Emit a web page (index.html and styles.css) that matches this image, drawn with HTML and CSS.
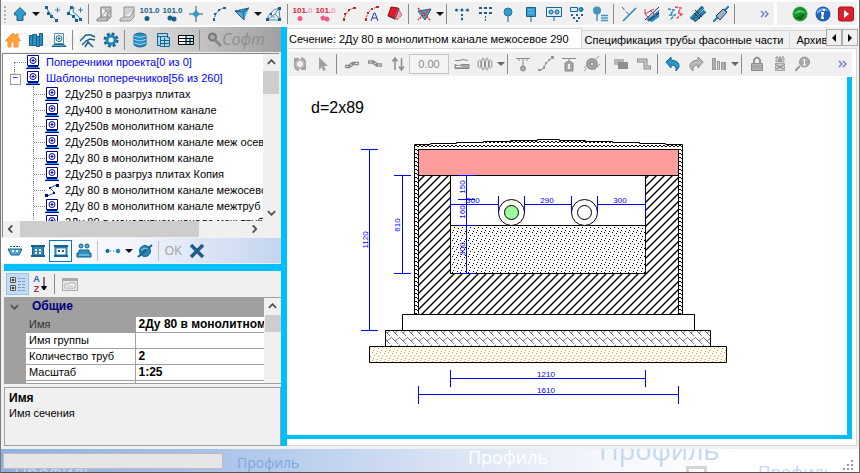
FILE: index.html
```html
<!DOCTYPE html>
<html lang="ru">
<head>
<meta charset="utf-8">
<title>Профиль</title>
<link rel="stylesheet" href="styles.css">
</head>
<body>
<svg class="sprite" aria-hidden="true">
  <symbol id="up" viewBox="0 0 16 16"><path d="M8 1.500 13.500 7v2H11v5.500H5V9H2.500V7z" fill="#2f9bd0" stroke="#17618c"/></symbol>
  <symbol id="poly" viewBox="0 0 16 16"><path d="M2 1 5 6l3 4 4 4M11 4h5M13.500 1.500v5" fill="none" stroke="#2388b8"/><g fill="#17618c"><path d="M1 0h3v3H1zM3 6h3v3H3zM6 9h3v3H6zM11 13h3v3h-3z"/></g></symbol>
  <symbol id="poly2" viewBox="0 0 16 16"><path d="M5 1 1 7l5 3 4 4M7 1l-1 5 5 4 3 4M11 4h5M13.500 1.500v5" fill="none" stroke="#2388b8"/><g fill="#17618c"><path d="M3 0h3v3H3zM0 6h3v3H0zM5 9h3v3H5zM8 13h3v3H8zM12 12h3v3h-3z"/></g></symbol>
  <symbol id="slab" viewBox="0 0 16 16"><path d="M5 1h10v10L11 15H1v-2l4-2zM5 1v10h10M5 11l6-7M11 15V8l4-4" fill="#bdbdbd" stroke="#8b8b8b"/></symbol>
  <symbol id="slab2" viewBox="0 0 16 16"><path d="M5 1h10v10L11 15H1v-2l4-2zM5 11h6l4-7" fill="#d0d0d0" stroke="#929292"/></symbol>
  <symbol id="ball1" viewBox="0 0 16 7"><circle cx="5" cy="3.500" r="2.500" fill="currentColor"/></symbol>
  <symbol id="ball2" viewBox="0 0 16 7"><circle cx="5" cy="3" r="2.500" fill="currentColor"/><circle cx="9" cy="4" r="2.500" fill="currentColor"/></symbol>
  <symbol id="cross" viewBox="0 0 16 16"><path d="M8 0v16M1 8h14" stroke="#17618c"/><path d="M8 4l4 4-4 4-4-4z" fill="#3f97c4"/></symbol>
  <symbol id="curve" viewBox="0 0 16 16"><path d="M3 14Q5 3 14 2" fill="none" stroke="currentColor" stroke-dasharray="2 1"/><path d="M2 12h2v3H2zM3 7h2v2H3zM7 3h2v2H7zM12 1h3v2h-3z" fill="currentColor"/></symbol>
  <symbol id="tri" viewBox="0 0 16 16"><path d="M1 5l14-3-5 12z" fill="#56acd5"/><path d="M1 5l8 1 6-4M9 6l1 8L1 5l14-3z" fill="none" stroke="#17618c"/></symbol>
  <symbol id="fan" viewBox="0 0 16 16"><path d="M1 14Q3 5 13 2l1 12zM1 14l8-6 4-6M9 8l5 6M4 8l5 4" fill="none" stroke="#4c8eb0"/><path d="M0 12h3v3H0zM4 7h2v2H4zM12 1h3v3h-3zM12 12h3v3h-3z" fill="#17618c"/></symbol>
  <symbol id="curveA" viewBox="0 0 16 16"><path d="M2 14Q3 3 14 1" fill="none" stroke="#b33" stroke-dasharray="2 1"/><path d="M1 12h2v3H1zM3 6h2v2H3zM7 2h2v2H7zM12 0h3v2h-3z" fill="#b42c2c"/><path d="M7 15l3-8h1l3 8M8 12h5" fill="none" stroke="#2334ad"/></symbol>
  <symbol id="redslab" viewBox="0 0 16 16"><path d="M4 1l7 1-3 11-7-3z" fill="#e31a22" stroke="#901018"/><path d="M11 2l4 7-5 5-3-2z" fill="#f5a5a8" stroke="#b51924" stroke-dasharray="1 1"/><path d="M2 10l6 3 4-11" stroke="#263d66" fill="none"/></symbol>
  <symbol id="killtri" viewBox="0 0 16 16"><path d="M2 5l13-2-6 11z" fill="#5a9fc0" stroke="#17618c"/><path d="M2 2l12 12M14 3L2 14" stroke="#ce3434" stroke-width="1.500" stroke-dasharray="2 1"/></symbol>
  <symbol id="dots3" viewBox="0 0 16 16"><path d="M2 4h12M8 8v7" stroke="#7bbddd" stroke-dasharray="1 2"/><g fill="#17618c"><circle cx="2.500" cy="4" r="1.500"/><circle cx="8" cy="4" r="1.500"/><circle cx="13.500" cy="4" r="1.500"/><path d="M7 8h2v2H7zM7 12h2v2H7z"/></g></symbol>
  <symbol id="dots6" viewBox="0 0 16 16"><g fill="#17618c"><path d="M2 1h3v2H2zM7 1h3v2H7zM12 1h3v2h-3zM2 6h3v2H2zM7 6h3v2H7zM12 6h3v2h-3zM8 10h1v2H8zM8 13h1v2H8z"/></g></symbol>
  <symbol id="pin" viewBox="0 0 16 16"><circle cx="8" cy="6" r="4" fill="#2f9bd0" stroke="#2377a2"/><path d="M8 10v6" stroke="#17618c"/></symbol>
  <symbol id="pinsq" viewBox="0 0 16 16"><path d="M3.500 1.500h9v9h-9z" fill="#2f9bd0" stroke="#17618c"/><path d="M5 4h6M5 7h6" stroke="#77c1e5"/><path d="M8 10v6" stroke="#17618c"/></symbol>
  <symbol id="pinbox" viewBox="0 0 16 16"><path d="M.5 1.500h15v9H.5z" fill="#d8edf6" stroke="#17618c"/><circle cx="5" cy="6" r="2" fill="#7bbddd" stroke="#17618c"/><circle cx="11" cy="6" r="2" fill="#7bbddd" stroke="#17618c"/><path d="M8 11v4" stroke="#17618c"/></symbol>
  <symbol id="pinmix" viewBox="0 0 16 16"><path d="M1.500 1.500h7v4h-7z" fill="#d8edf6" stroke="#17618c"/><circle cx="12" cy="3.500" r="2" fill="#2f9bd0" stroke="#17618c"/><path d="M2 8h2v2H2zM7 8h2v2H7zM12 8h2v2h-2zM4 11h2v2H4zM9 11h2v2H9zM7 14h2v2H7z" fill="#17618c"/></symbol>
  <symbol id="pinlist" viewBox="0 0 16 16"><circle cx="5" cy="4.500" r="4" fill="#4395bd"/><path d="M5 8v7" stroke="#17618c"/><path d="M9 9.500h7M9 12h7M9 14.500h7" stroke="#3c9ac9" stroke-width="1.500"/></symbol>
  <symbol id="split" viewBox="0 0 16 16"><path d="M2 15L15 2" stroke="#1d84b5" stroke-width="1.500"/><path d="M1 1l7 8" stroke="#3f57d4" stroke-dasharray="4 2"/></symbol>
  <symbol id="redpipe" viewBox="0 0 16 16"><path d="M2 14L15 4v7l-7 5z" fill="#238bbd"/><path d="M1 14L15 1M4 15L15 7" stroke="#1d1d65"/><path d="M1 3v5l5 5M1 8l9-5M6 4l6 6" stroke="#d83c47" fill="none"/></symbol>
  <symbol id="zig" viewBox="0 0 16 16"><path d="M1 3l6 1-4 5 5 0-5 5" stroke="#2586b5" fill="none" stroke-dasharray="3 1" stroke-width="1.500"/><path d="M8 1l6 1-3 5 4 1-6 5" stroke="#e14e60" fill="none" stroke-dasharray="3 1" stroke-width="1.500"/></symbol>
  <symbol id="pipes" viewBox="0 0 16 16"><path d="M1 13L13 1M4 15L15 5" stroke="#17618c" stroke-width="3.500"/><path d="M1 12L13 2M5 14L15 5" stroke="#42bad9"/><path d="M5 4l7 7M4 7l6 6" stroke="#183550"/></symbol>
  <symbol id="cyl" viewBox="0 0 16 16"><path d="M0 16L16 0" stroke="#157db4" stroke-width="2"/><path d="M3 10L10 3l4 3-7 8z" fill="#9cb0c9" stroke="#233c58"/></symbol>
  <symbol id="more" viewBox="0 0 10 8"><path d="M1 1l3 3-3 3M5 1l3 3-3 3" fill="none" stroke="#6974c2" stroke-width="1.300"/></symbol>
  <symbol id="green" viewBox="0 0 16 16"><circle cx="8" cy="8" r="7" fill="#15922b" stroke="#3c9847"/><path d="M2 8Q7 1 14 7L9 6z" fill="#5ed16b"/><path d="M3 12l9-4-2 6z" fill="#06651a"/></symbol>
  <symbol id="info" viewBox="0 0 16 16"><circle cx="8" cy="8" r="7.500" fill="#2262b5"/><path d="M2 5q6-6 12 0-6-2-12 3z" fill="#6faae7"/><path d="M9 3v2M6 7h2l-1 5h2" stroke="#fff" stroke-width="2" fill="none"/></symbol>
  <symbol id="play" viewBox="0 0 16 16"><rect x=".5" y="1" width="15" height="14" rx="2" fill="#d9202d" stroke="#a31521"/><path d="M6 4l5 4-5 4z" fill="#fff"/></symbol>
  <symbol id="home" viewBox="0 0 16 16"><path d="M1 8l7-7 3 3V2h2v4l2 2v1h-2v6H9v-5H6v5H3V9H1z" fill="#ffa43b" stroke="#f3913e"/></symbol>
  <symbol id="books" viewBox="0 0 16 16"><path d="M1.500 3.500h3v10h-3zM4.500 2.500h4v11h-4zM8.500 4.500h3v10h-3zM11.500 1.500h3v12h-3z" fill="#2b91c3" stroke="#17618c"/></symbol>
  <symbol id="target" viewBox="0 0 16 16"><path d="M3.500 1.500h9v10h-9z" fill="#fff" stroke="#4c91b5"/><circle cx="8" cy="6.500" r="3" fill="none" stroke="#17618c"/><path d="M8 5v3M6.500 6.500h3" stroke="#17618c"/><path d="M1 14.500l2-2h10l2 2z" fill="#69afd0" stroke="#17618c"/></symbol>
  <symbol id="graph" viewBox="0 0 16 16"><path d="M0 9l6-6h5l4 2M2 13l4-4 4-2 5 1M5 15l3-5 5 5" fill="none" stroke="#17618c" stroke-width="1.500"/></symbol>
  <symbol id="gear" viewBox="0 0 16 16"><circle cx="8" cy="8" r="6" fill="none" stroke="#17618c" stroke-width="3" stroke-dasharray="2.700 2"/><circle cx="8" cy="8" r="4" fill="#e4f3f9" stroke="#2684b5" stroke-width="3"/></symbol>
  <symbol id="db" viewBox="0 0 16 16"><path d="M2 3Q8-1 14 3v10q-6 4-12 0z" fill="#218fc5" stroke="#17618c"/><path d="M2 4q6 3 12 0M2 7.500q6 3 12 0M2 11q6 3 12 0" fill="none" stroke="#a7d7ec"/></symbol>
  <symbol id="sheet" viewBox="0 0 16 16"><path d="M2.500 1.500h10v4h2v9h-9v-1h-3zM2 4.500h10M5.500 5v8M6 8.500h8M6 11.500h8M9.500 6v8" fill="#a9d8ed" stroke="#17618c"/></symbol>
  <symbol id="tablei" viewBox="0 0 16 16"><path d="M.5 3.500h15v9H.5z" fill="#a4eaff" stroke="#000"/><path d="M1 4h6v8H1z" fill="#fff"/><path d="M0 6.500h16M0 9.500h16M8 3v10M12 7v6" stroke="#000"/></symbol>
  <symbol id="search" viewBox="0 0 16 16"><circle cx="5.500" cy="5" r="3.500" fill="#a8a8a8" stroke="#777" stroke-width="2"/><path d="M8 8l6 6" stroke="#888" stroke-width="3"/></symbol>
  <symbol id="node" viewBox="0 0 14 16"><path d="M1.500 1.500h11v10h-11z" fill="#fff" stroke="#00009c"/><circle cx="7" cy="6.500" r="3" fill="none" stroke="#00009c"/><path d="M7 5v3M5.500 6.500h3" stroke="#00009c"/><path d="M0 15l2-3h10l2 3z" fill="#00a6d0"/><path d="M0 14.500h14M2 12.500h10" stroke="#00009c"/></symbol>
  <symbol id="nodeline" viewBox="0 0 14 16"><path d="M11 3L5 6l5 5-8 3" fill="none" stroke="#17618c"/><path d="M11 2h3v3h-3zM4 5h2v2H4zM8 10h2v2H8zM0 12h3v3H0z" fill="#00009c"/></symbol>
  <symbol id="trough" viewBox="0 0 16 16"><path d="M1 6h14l-3 6H4z" fill="#52a7cf" stroke="#17618c"/><path d="M3 3.500h10" stroke="#17618c" stroke-dasharray="2 1"/><path d="M5 7h2v2H5zM9 7h2v2H9z" fill="#fff"/></symbol>
  <symbol id="duct" viewBox="0 0 16 16"><path d="M2.500 3.500h11v9h-11z" fill="#338bb5" stroke="#17618c"/><path d="M1 3h14M1 13h14" stroke="#17618c" stroke-width="2"/><path d="M5 6h2v2H5zM9 6h2v2H9zM5 9h2v2H5zM9 9h2v2H9z" fill="#fff"/></symbol>
  <symbol id="duct2" viewBox="0 0 16 16"><path d="M2.500 4.500h11v8h-11z" fill="#fff" stroke="#2684b5" stroke-width="2"/><path d="M1 3h14M1 13h14" stroke="#17618c" stroke-width="2"/><path d="M5 7h2v2H5zM9 7h2v2H9z" fill="#17618c"/></symbol>
  <symbol id="cart" viewBox="0 0 16 16"><circle cx="5" cy="3" r="2" fill="#56aed6" stroke="#17618c"/><circle cx="11" cy="3" r="2" fill="#56aed6" stroke="#17618c"/><path d="M3 7h10v3h2v4H1v-4h2z" fill="#2c91c0" stroke="#17618c"/><path d="M3 12h10" stroke="#a7d7ec"/></symbol>
  <symbol id="link" viewBox="0 0 16 16"><path d="M2 8h12" stroke="#17618c" stroke-dasharray="1 2"/><circle cx="2.500" cy="8" r="2" fill="#17618c"/><circle cx="13" cy="8" r="2.200" fill="#2684b5"/></symbol>
  <symbol id="empty" viewBox="0 0 16 16"><circle cx="8" cy="8" r="5.500" fill="#2586b5" stroke="#17618c"/><path d="M1 14L15 2" stroke="#17618c" stroke-width="2"/><path d="M4 7q4-3 7-1" fill="none" stroke="#8fcde8"/></symbol>
  <symbol id="close" viewBox="0 0 16 16"><path d="M2 2l12 12M14 2L2 14" stroke="#1c5c87" stroke-width="3.500"/></symbol>
  <symbol id="cat" viewBox="0 0 20 18"><path d="M2.500 2.500h5v5h-5zM2.500 10.500h5v5h-5z" fill="#fff" stroke="#555"/><path d="M3.500 5h3M5 3.500v3M3.500 13h3M5 11.500v3" stroke="#000"/><path d="M10 3.500h8M10 6.500h8M10 9.500h8M10 12.500h8M10 15.500h8" stroke="#7d95c9" stroke-dasharray="3 1"/></symbol>
  <symbol id="downarr" viewBox="0 0 8 16"><path d="M4 1v13M1.500 10.500 4 14l2.500-3.500z" stroke="#000" fill="#000"/></symbol>
  <symbol id="card" viewBox="0 0 16 16"><path d="M.5 2.500h15v12H.5z" fill="#e6e6e6" stroke="#aaa"/><path d="M1 4h14" stroke="#aaa" stroke-width="2"/><path d="M3 8h3l1-1h6v5H3z" fill="#fff" stroke="#aaa"/><path d="M5 10h6" stroke="#aaa"/></symbol>
  <symbol id="refresh" viewBox="0 0 16 16"><path d="M2 2h5v3L5 6q-2 4 2 6v3Q1 14 2 7zM9 1q6 1 5 8v5H9v-3l2-1q2-4-2-6z" fill="#a0a0a0"/><circle cx="8" cy="8" r="4" fill="none" stroke="#b8b8b8" stroke-width="2"/></symbol>
  <symbol id="cursor" viewBox="0 0 16 16"><path d="M4 1l9 9H9l2 4-3 1-1-4-3 3z" fill="#a0a0a0"/></symbol>
  <symbol id="chain" viewBox="0 0 16 16"><path d="M1 10.500h4l4-3h6" stroke="#8c8c8c" stroke-width="3.500" fill="none"/><path d="M2 10.500h2M6 9.500l2-1M11 7.500h3" stroke="#ddd"/></symbol>
  <symbol id="chain2" viewBox="0 0 16 16"><path d="M1 6h5l4 3h5" stroke="#8c8c8c" stroke-width="3.500" fill="none"/><path d="M2 6h3M7 7l2 1M11 9h3" stroke="#ddd"/></symbol>
  <symbol id="updown" viewBox="0 0 16 16"><path d="M5 14V3M2.500 5.500L5 2l2.500 3.500M11.500 2v11M9 10.500l2.500 3.500 2.500-3.500" stroke="#8c8c8c" stroke-width="1.500" fill="none"/></symbol>
  <symbol id="pipeg" viewBox="0 0 16 16"><path d="M1 4.500h5l2-1 6 1" stroke="#858585" fill="none"/><path d="M1 8.500q4 3 7 0h7v4H1z" stroke="#858585" fill="#aaa"/><path d="M2 10.500h5" stroke="#eee"/></symbol>
  <symbol id="coil" viewBox="0 0 16 16"><g fill="none" stroke="#8c8c8c"><ellipse cx="2.500" cy="8" rx="1.500" ry="4"/><ellipse cx="6" cy="8" rx="1.500" ry="6"/><ellipse cx="10" cy="8" rx="1.500" ry="6"/><ellipse cx="13.500" cy="8" rx="1.500" ry="4"/></g></symbol>
  <symbol id="tee" viewBox="0 0 16 16"><path d="M1 2.500h14M8 3v8M3 4h2M11 4h2" stroke="#8c8c8c"/><circle cx="8" cy="12.500" r="2.500" fill="#aaa" stroke="#888"/></symbol>
  <symbol id="pathg" viewBox="0 0 16 16"><path d="M1 15l5-3 2-5 7-6" fill="none" stroke="#8c8c8c"/><path d="M0 13h3v2H0zM5 10h2v3H5zM7 6h2v2H7zM10 3h2v2h-2zM13 0h3v3h-3z" fill="#999"/></symbol>
  <symbol id="bottle" viewBox="0 0 16 16"><path d="M1 2.500h14M8 2v4" stroke="#8c8c8c"/><path d="M4 15V7l4-2 4 2v8z" fill="#a8a8a8" stroke="#888"/><path d="M7 8h2v5H7z" fill="#eee"/></symbol>
  <symbol id="eye" viewBox="0 0 16 16"><circle cx="8" cy="8" r="5" fill="#aaa" stroke="#999" stroke-width="2"/><circle cx="8" cy="8" r="2" fill="#ddd" stroke="#777"/><path d="M0 12L6 6M0 15l4-4M10 14l6-6M11 4l4-4" stroke="#999"/></symbol>
  <symbol id="stack" viewBox="0 0 16 16"><path d="M1 3h10v6H1z" fill="#b5b5b5"/><path d="M5 6h10v7H5z" fill="#8f8f8f"/></symbol>
  <symbol id="step" viewBox="0 0 16 16"><path d="M1 4.500h8.500v7H15" fill="none" stroke="#8c8c8c" stroke-width="4"/><path d="M2 4.500h7.500v7H14" fill="none" stroke="#c6c6c6" stroke-width="2"/></symbol>
  <symbol id="undo" viewBox="0 0 16 16"><path d="M1 6l5-5v3q9 1 8 7l-3 4q1-6-5-6v3z" fill="#269acb" stroke="#17618c"/></symbol>
  <symbol id="redo" viewBox="0 0 16 16"><path d="M15 6l-5-5v3q-9 1-8 7l3 4q-1-6 5-6v3z" fill="#bbb" stroke="#888"/></symbol>
  <symbol id="bars" viewBox="0 0 16 16"><path d="M1 2h4v12H1zM6 5h3v9H6zM10 6h5v8h-5z" fill="#999"/><path d="M3 3v10M7.500 6v8M12 7v7" stroke="#c8c8c8"/></symbol>
  <symbol id="lock" viewBox="0 0 16 16"><path d="M5 7V4q3-5 6 0v3" fill="none" stroke="#949494" stroke-width="2"/><path d="M2.500 7.500h11v7h-11z" fill="#b5b5b5" stroke="#8c8c8c"/><path d="M3 10h10M3 12h10" stroke="#999"/></symbol>
  <symbol id="manlock" viewBox="0 0 16 16"><path d="M4 1h8v5H4zM3.500 7.500h9v7h-9z" fill="#ccc" stroke="#8c8c8c" stroke-dasharray="2 1"/><circle cx="8" cy="4" r="2" fill="#999"/><path d="M4 9l8 4M12 9l-8 4" stroke="#888"/></symbol>
  <symbol id="mag1" viewBox="0 0 16 16"><circle cx="9.500" cy="6" r="5" fill="#aaa" stroke="#949494"/><path d="M5 10L0 15" stroke="#999" stroke-width="2"/><path d="M8 4.500L9.500 3v6M8 9h3" stroke="#fff" fill="none"/></symbol>
  <symbol id="chev" viewBox="0 0 10 6"><path d="M1 5l4-4 4 4" fill="none" stroke="#505050" stroke-width="2"/></symbol>
</svg>

<div class="window">
  <header class="topbar">
    <div class="strip">
      <span class="grip"></span>
      <button class="tool" aria-label="Вверх"><svg><use href="#up"/></svg></button><button class="drop" aria-label="Список"></button>
      <button class="tool" aria-label="Линия"><svg><use href="#poly"/></svg></button>
      <button class="tool" aria-label="Линии"><svg><use href="#poly2"/></svg></button>
      <i class="sep"></i>
      <button class="tool" aria-label="Плита"><svg><use href="#slab"/></svg></button>
      <button class="tool" aria-label="Откос"><svg><use href="#slab2"/></svg></button>
      <button class="tool mark">101.0<svg><use href="#ball1"/></svg></button>
      <button class="tool mark">101.0<svg><use href="#ball2"/></svg></button>
      <button class="tool" aria-label="Точка"><svg><use href="#cross"/></svg></button>
      <button class="tool blue" aria-label="Кривая"><svg><use href="#curve"/></svg></button>
      <button class="tool" aria-label="Поверхность"><svg><use href="#tri"/></svg></button><button class="drop" aria-label="Список"></button>
      <button class="tool" aria-label="Сетка"><svg><use href="#fan"/></svg></button>
      <i class="sep"></i>
      <button class="tool mark red"><span>101.<b>0</b></span><svg><use href="#ball1"/></svg></button>
      <button class="tool mark red"><span>101.<b>0</b></span><svg><use href="#ball2"/></svg></button>
      <button class="tool darkred" aria-label="Красная кривая"><svg><use href="#curve"/></svg></button>
      <button class="tool" aria-label="Подпись кривой"><svg><use href="#curveA"/></svg></button>
      <button class="tool" aria-label="Красная плита"><svg><use href="#redslab"/></svg></button>
      <i class="sep"></i>
      <button class="tool" aria-label="Удалить"><svg><use href="#killtri"/></svg></button><button class="drop" aria-label="Список"></button>
      <i class="sep"></i>
      <button class="tool" aria-label="Ряд"><svg><use href="#dots3"/></svg></button>
      <button class="tool" aria-label="Ряды"><svg><use href="#dots6"/></svg></button>
      <button class="tool" aria-label="Труба"><svg><use href="#pin"/></svg></button>
      <button class="tool" aria-label="Короб"><svg><use href="#pinsq"/></svg></button>
      <button class="tool" aria-label="Канал"><svg><use href="#pinbox"/></svg></button>
      <button class="tool" aria-label="Набор"><svg><use href="#pinmix"/></svg></button>
      <button class="tool" aria-label="Список труб"><svg><use href="#pinlist"/></svg></button>
      <i class="sep"></i>
      <button class="tool" aria-label="Ответвление"><svg><use href="#split"/></svg></button>
      <button class="tool" aria-label="Футляр"><svg><use href="#redpipe"/></svg></button>
      <button class="tool" aria-label="Разрыв"><svg><use href="#zig"/></svg></button>
      <button class="tool" aria-label="Трубы"><svg><use href="#pipes"/></svg></button>
      <button class="tool" aria-label="Цилиндр"><svg><use href="#cyl"/></svg></button>
      <i class="sep"></i>
      <button class="more" aria-label="Ещё"><svg><use href="#more"/></svg></button>
    </div>
    <div class="strip side">
      <button class="tool" aria-label="Сеть"><svg><use href="#green"/></svg></button>
      <button class="tool" aria-label="Сведения"><svg><use href="#info"/></svg></button>
      <button class="tool" aria-label="Видео"><svg><use href="#play"/></svg></button>
    </div>
  </header>

  <main class="work">
    <aside class="left">
      <div class="bar navbar">
        <span class="ghost ghost-a">Профиль</span><span class="ghost ghost-b">Софт</span>
        <button class="tool" aria-label="Домой"><svg><use href="#home"/></svg></button>
        <button class="tool" aria-label="Книги"><svg><use href="#books"/></svg></button>
        <button class="tool" aria-label="Поперечники"><svg><use href="#target"/></svg></button>
        <i class="sep"></i>
        <button class="tool" aria-label="График"><svg><use href="#graph"/></svg></button>
        <button class="tool" aria-label="Настройки"><svg><use href="#gear"/></svg></button>
        <i class="sep"></i>
        <button class="tool" aria-label="База"><svg><use href="#db"/></svg></button>
        <button class="tool" aria-label="Ведомость"><svg><use href="#sheet"/></svg></button>
        <button class="tool" aria-label="Таблица"><svg><use href="#tablei"/></svg></button>
        <i class="sep"></i>
        <button class="tool" aria-label="Поиск"><svg><use href="#search"/></svg></button>
      </div>

      <div class="treebox">
        <ul class="tree">
          <li class="root"><svg><use href="#node"/></svg>Поперечники проекта[0 из 0]</li>
          <li class="root open"><svg><use href="#node"/></svg>Шаблоны поперечников[56 из 260]</li>
          <li><svg><use href="#node"/></svg>2Ду250 в разгруз плитах</li>
          <li><svg><use href="#node"/></svg>2Ду400 в монолитном канале</li>
          <li><svg><use href="#node"/></svg>2Ду250в монолитном канале</li>
          <li><svg><use href="#node"/></svg>2Ду250в монолитном канале меж осевое</li>
          <li><svg><use href="#node"/></svg>2Ду 80 в монолитном канале</li>
          <li><svg><use href="#node"/></svg>2Ду250 в разгруз плитах Копия</li>
          <li><svg><use href="#nodeline"/></svg>2Ду 80 в монолитном канале межосевое</li>
          <li><svg><use href="#node"/></svg>2Ду 80 в монолитном канале межтруб</li>
          <li><svg><use href="#node"/></svg>2Ду 80 в монолитном канале меж труб</li>
        </ul>
        <div class="vscroll"><svg><use href="#chev"/></svg><i class="thumb tall"></i><svg class="down"><use href="#chev"/></svg></div>
        <div class="hscroll"><svg class="toleft"><use href="#chev"/></svg><i class="hthumb"></i><svg class="toright"><use href="#chev"/></svg></div>
      </div>

      <div class="bar typebar">
        <button class="tool" aria-label="Лоток"><svg><use href="#trough"/></svg></button>
        <button class="tool" aria-label="Канал"><svg><use href="#duct"/></svg></button>
        <button class="tool chosen" aria-label="Монолитный канал"><svg><use href="#duct2"/></svg></button>
        <button class="tool" aria-label="Опора"><svg><use href="#cart"/></svg></button>
        <i class="sep"></i>
        <button class="tool" aria-label="Связь"><svg><use href="#link"/></svg></button><button class="drop" aria-label="Список"></button>
        <button class="tool" aria-label="Без труб"><svg><use href="#empty"/></svg></button>
        <i class="sep"></i>
        <button class="tool ok" disabled>OK</button>
        <button class="tool" aria-label="Закрыть"><svg><use href="#close"/></svg></button>
      </div>

      <div class="props">
        <div class="bar gridbar">
          <button class="tool pressed" aria-label="По категориям"><svg class="wide"><use href="#cat"/></svg></button>
          <button class="tool az" aria-label="По алфавиту"><span><b>A</b><em>Z</em></span><svg><use href="#downarr"/></svg></button>
          <i class="sep"></i>
          <button class="tool" aria-label="Страницы свойств" disabled><svg><use href="#card"/></svg></button>
        </div>
        <div class="propgrid">
          <table>
            <colgroup><col class="c-gutter"><col class="c-name"><col></colgroup>
            <thead><tr><td class="gutter"><svg class="down"><use href="#chev"/></svg></td><th colspan="2" scope="colgroup">Общие</th></tr></thead>
            <tbody>
              <tr class="current"><td class="gutter"></td><th scope="row">Имя</th><td>2Ду 80 в монолитном канале</td></tr>
              <tr><td class="gutter"></td><th scope="row">Имя группы</th><td></td></tr>
              <tr><td class="gutter"></td><th scope="row">Количество труб</th><td>2</td></tr>
              <tr><td class="gutter"></td><th scope="row">Масштаб</th><td>1:25</td></tr>
              <tr><td class="gutter"></td><th scope="row"></th><td></td></tr>
            </tbody>
          </table>
          <div class="vscroll"><svg><use href="#chev"/></svg><i class="thumb"></i><svg class="down"><use href="#chev"/></svg></div>
        </div>
        <div class="hint"><b>Имя</b><span>Имя сечения</span></div>
      </div>
    </aside>

    <section class="right">
      <nav class="tabs" role="tablist">
        <button class="tab active" role="tab">Сечение: 2Ду 80 в монолитном канале межосевое 290</button>
        <button class="tab" role="tab">Спецификация трубы фасонные части</button>
        <button class="tab cut" role="tab">Архивы</button>
        <span class="spin"><button class="prev" aria-label="Назад"></button><button class="next" aria-label="Вперёд"></button></span>
      </nav>
      <div class="page">
        <div class="bar drawbar">
          <button class="tool" aria-label="Обновить"><svg><use href="#refresh"/></svg></button>
          <button class="tool" aria-label="Выбор"><svg><use href="#cursor"/></svg></button>
          <i class="sep"></i>
          <button class="tool" aria-label="Звено"><svg><use href="#chain"/></svg></button>
          <button class="tool" aria-label="Звено вниз"><svg><use href="#chain2"/></svg></button>
          <button class="tool" aria-label="Вверх-вниз"><svg><use href="#updown"/></svg></button>
          <input class="num" type="text" value="0.00" aria-label="Значение" disabled>
          <button class="tool" aria-label="Профиль трубы"><svg><use href="#pipeg"/></svg></button>
          <button class="tool" aria-label="Компенсатор"><svg><use href="#coil"/></svg></button><button class="drop grey" aria-label="Список"></button>
          <i class="sep"></i>
          <button class="tool" aria-label="Тройник"><svg><use href="#tee"/></svg></button>
          <button class="tool" aria-label="Путь"><svg><use href="#pathg"/></svg></button>
          <button class="tool" aria-label="Сосуд"><svg><use href="#bottle"/></svg></button>
          <button class="tool" aria-label="Вид"><svg><use href="#eye"/></svg></button>
          <i class="sep"></i>
          <button class="tool" aria-label="Слои"><svg><use href="#stack"/></svg></button>
          <button class="tool" aria-label="Ступень"><svg><use href="#step"/></svg></button>
          <i class="sep"></i>
          <button class="tool" aria-label="Отменить"><svg><use href="#undo"/></svg></button>
          <button class="tool" aria-label="Повторить"><svg><use href="#redo"/></svg></button>
          <button class="tool" aria-label="Столбцы"><svg><use href="#bars"/></svg></button><button class="drop grey" aria-label="Список"></button>
          <i class="sep"></i>
          <button class="tool" aria-label="Замок"><svg><use href="#lock"/></svg></button>
          <button class="tool" aria-label="Блокировка"><svg><use href="#manlock"/></svg></button>
          <button class="tool" aria-label="Масштаб"><svg><use href="#mag1"/></svg></button>
          <button class="more" aria-label="Ещё"><svg><use href="#more"/></svg></button>
        </div>
        <div class="canvas">
          <svg class="drawing" viewBox="288 77 559 357" width="559" height="357" role="img" aria-label="Сечение канала">
            <defs>
              <pattern id="hatch" width="8" height="8" patternUnits="userSpaceOnUse"><path d="M-1 9L9-1M-1 1L1-1M7 9L9 7" stroke="#000" stroke-width="1.400"/></pattern>
              <pattern id="sand" width="8" height="8" patternUnits="userSpaceOnUse"><path d="M0 1h1v1H0zM4 0h1v1H4zM6 3h1v1H6zM2 4h1v1H2zM5 6h1v1H5zM1 7h1v1H1z" fill="#000" stroke="none"/></pattern>
              <pattern id="gold" width="8" height="8" patternUnits="userSpaceOnUse"><path d="M0 1h1v1H0zM4 0h1v1H4zM6 3h1v1H6zM2 4h1v1H2zM5 6h1v1H5zM1 7h1v1H1z" fill="#ffa000" stroke="none"/></pattern>
              <pattern id="stone" width="8" height="8" patternUnits="userSpaceOnUse"><path d="M0 2l3 3 5-4M3 5l3 3" fill="none" stroke="#777"/></pattern>
              <pattern id="wave" width="4" height="4" patternUnits="userSpaceOnUse"><path d="M0 1l2 2 2-2" fill="none" stroke="#000"/></pattern>
            </defs>
            <text x="311" y="113" class="title">d=2x89</text>
            <g stroke="#000" fill="#fff">
              <path d="M414.500 314.500V144.500h16v-1h26v-1h27v-1h27v-1h27v-1h22v1h26v1h27v1h27v1h26v1h17v170h-4v-165h-260v165z" fill="url(#wave)"/>
              <path d="M418.500 149.500h260v26h-260z" fill="#ff9c9c"/>
              <path d="M418.500 175.500h260v139h-260z" fill="url(#hatch)"/>
              <path d="M450.500 175.500h195v98h-195z"/>
              <path d="M450.500 225.500h195v48h-195z" fill="url(#sand)"/>
              <circle cx="511.500" cy="212.500" r="13"/><circle cx="511.500" cy="212.500" r="7" fill="#9cff9c"/>
              <circle cx="584.500" cy="212.500" r="13"/><circle cx="584.500" cy="212.500" r="7"/>
              <path d="M402.500 314.500h292v16h-292z"/>
              <path d="M385.500 330.500h325v16h-325z" fill="url(#stone)"/>
              <path d="M369.500 346.500h357v16h-357z" fill="url(#gold)"/>
            </g>
            <g class="dims">
              <path d="M369.500 149.500v181M361 149.500h17M361 330.500h17M402.500 175.500v98M394 175.500h17M394 273.500h17M466.500 175.500v98M458 175.500h17M458 199.500h17M458 225.500h17M458 273.500h17M450.500 204.500h48M450.500 196v17M498.500 196v17M524.500 204.500h47M524.500 196v17M571.500 196v17M597.500 204.500h48M597.500 196v17M645.500 196v17M450.500 378.500h195M450.500 370v17M645.500 370v17M418.500 394.500h260M418.500 386v18M678.500 386v18"/>
              <text x="473" y="203">300</text><text x="547" y="203">290</text><text x="620" y="203">300</text>
              <text x="546" y="377">1210</text><text x="546" y="393">1610</text>
              <text transform="translate(368 240) rotate(-90)">1120</text>
              <text transform="translate(400 225) rotate(-90)">610</text>
              <text transform="translate(465 187) rotate(-90)">150</text>
              <text transform="translate(465 212) rotate(-90)">160</text>
              <text transform="translate(465 249) rotate(-90)">300</text>
            </g>
          </svg>
        </div>
      </div>
    </section>
  </main>

  <footer class="status">
    <span class="word w1">Профиль</span><span class="word w2">Профиль</span><span class="word w3">Профиль</span><span class="word w4">Профиль</span><span class="word w5">Профиль</span><i class="block"></i>
    <div class="progress" role="progressbar" aria-label="Ход работы"></div>
    <svg class="resize" viewBox="0 0 12 12"><path d="M8 0h2v2H8zM4 4h2v2H4zM8 4h2v2H8zM0 8h2v2H0zM4 8h2v2H4zM8 8h2v2H8z" fill="#999"/></svg>
  </footer>
</div>
</body>
</html>
```
FILE: styles.css
```css
* { box-sizing: border-box; }
body { margin: 0; font-family: "Liberation Sans", Arial, sans-serif; font-size: 11px; color: #000; background: #f0f0f0; }
button, input { font: inherit; color: inherit; margin: 0; padding: 0; border: 0; background: none; }
.sprite { position: absolute; width: 0; height: 0; }
.window { height: 100vh; display: grid; grid-template-rows: 27px minmax(0, 1fr) 24px; border-left: 1px solid #7a7a7a; border-right: 1px solid #6b6b6b; border-bottom: 1px solid #555; }

.topbar { display: flex; gap: 3px; background: #fff; padding: 2px 2px 2px 0; }
.strip { display: flex; align-items: center; flex: 1; min-width: 0; background: #f0f0f0; }
.strip.side { flex: none; width: 80px; justify-content: flex-end; }
.grip { width: 7px; height: 18px; background: radial-gradient(circle, #b0b0b0 1px, transparent 1px) 2px 0 / 4px 4px repeat-y; }
.tool { width: 23px; height: 22px; flex: none; display: flex; align-items: center; justify-content: center; }
.tool svg { width: 16px; height: 16px; }
.sep { width: 1px; height: 20px; margin: 0 3px 0 2px; background: #8c8c8c; flex: none; }
.drop { width: 9px; height: 22px; flex: none; display: flex; align-items: center; justify-content: center; }
.drop::before { content: ""; border: 4px solid transparent; border-top-color: #111; border-bottom: 0; }
.drop.grey::before { border-top-color: #666; }
.mark { flex-direction: column; font-family: "Liberation Sans Narrow", "Liberation Sans", Arial, sans-serif; font-size: 8px; line-height: 9px; font-weight: bold; color: #17618c; }
.tool.mark svg { height: 7px; }
.mark.red { color: #e0243c; }
.mark.red b { color: #f3a3ba; }
.mark.red svg { color: #ec5c86; }
.blue { color: #17618c; }
.darkred { color: #b42c2c; }
.more { margin-left: auto; margin-right: 2px; width: 12px; height: 22px; }
.more svg { width: 10px; height: 8px; display: block; }

.work { display: grid; grid-template-columns: 280px 6px minmax(0, 1fr); min-height: 0; padding-bottom: 2px; background: linear-gradient(#00bfff, #00bfff) 280px 0 / 6px 100% no-repeat content-box; }
.left { grid-column: 1; display: flex; flex-direction: column; min-height: 0; }
.right { grid-column: 3; display: flex; flex-direction: column; min-height: 0; }
.bar { display: flex; align-items: center; position: relative; flex: none; }
.navbar { height: 25px; isolation: isolate; background: linear-gradient(90deg, #fff 0, #fafafa 25%, #a0a0a0 100%); }
.ghost { position: absolute; z-index: -1; top: 2px; font: 18px "Open Sans", sans-serif; line-height: 20px; color: #eee; }
.ghost-a { left: 16px; }
.ghost-b { left: 221px; font-size: 16px; font-style: italic; color: #8f8f8f; }

.treebox { display: grid; grid-template-columns: minmax(0, 1fr) 16px; grid-template-rows: minmax(0, 1fr) 16px; flex: 1; min-height: 0; margin: 1px 2px 1px 1px; border-top: 1px solid #828790; border-left: 1px solid #828790; background: #fff; }
.tree { list-style: none; margin: 0; padding: 0; overflow: hidden; }
.tree li { height: 16px; line-height: 16px; padding-left: 42px; display: flex; align-items: center; gap: 6px; white-space: nowrap; position: relative; }
.tree li svg { width: 14px; height: 16px; flex: none; }
.tree li::before { content: ""; position: absolute; left: 30px; top: 0; width: 12px; height: 16px; border-left: 1px dotted #888; background: repeating-linear-gradient(90deg, #888 0 1px, transparent 1px 2px) 0 8px / 12px 1px no-repeat; }
.tree .root { color: #00f; padding-left: 23px; }
.tree .root::before { left: 11px; top: 8px; height: 8px; background-position: 0 0; }
.tree .open::before { top: 0; background-position: 0 8px; }
.tree .open::after { content: "−"; position: absolute; left: 7px; top: 4px; width: 9px; height: 9px; border: 1px solid #999; background: #fff; line-height: 6px; font-size: 10px; text-align: center; color: #00c; }
.vscroll { display: flex; flex-direction: column; align-items: center; background: #f0f0f0; padding: 5px 0; }
.vscroll svg { width: 9px; height: 6px; flex: none; }
.down { transform: rotate(180deg); margin-top: auto; }
.thumb { width: 16px; height: 17px; margin-top: 6px; background: #cdcdcd; flex: none; }
.thumb.tall { height: 23px; }
.hscroll { grid-column: 1 / 3; display: flex; align-items: center; background: #f0f0f0; padding: 0 20px 0 3px; }
.hscroll svg { width: 9px; height: 6px; flex: none; }
.toleft { transform: rotate(-90deg); }
.toright { transform: rotate(90deg); margin-left: auto; }
.hthumb { width: 179px; height: 16px; margin-left: 5px; background: #cdcdcd; }

.typebar { height: 25px; margin-bottom: 1px; padding-left: 2px; background: linear-gradient(90deg, #fff, #f3f6fc 45%, #c4d4ef); }
.typebar .sep { background: #bcc3cf; }
.chosen { border: 1px solid #0078d7; }
.ok { font-size: 12px; color: #a5a5a5; }

.props { flex: none; margin-left: 3px; border-top: 7px solid #00bfff; }
.gridbar { height: 26px; padding-left: 2px; }
.pressed { background: #c2dcf3; border: 1px solid #90c4f0; }
.tool .wide { width: 20px; height: 18px; }
.az { font-size: 9px; line-height: 10px; }
.az span { display: flex; flex-direction: column; }
.az b { color: #2d5fa8; }
.az em { color: #a8324a; font-style: normal; font-weight: bold; }
.tool.az svg { width: 8px; }
.propgrid { display: grid; grid-template-columns: minmax(0, 1fr) 17px; height: 87px; overflow: hidden; border: 1px solid #a0a0a0; border-right: 0; background: #a0a0a0; }
.propgrid table { width: 100%; table-layout: fixed; border-collapse: collapse; align-self: start; }
.c-gutter { width: 21px; }
.c-name { width: 109px; }
.propgrid td, .propgrid th { height: 16px; padding: 0 0 0 3px; line-height: 15px; text-align: left; white-space: nowrap; overflow: hidden; background: #fff; border-bottom: 1px solid #a0a0a0; font-weight: normal; }
.propgrid tbody td { font-size: 12px; font-weight: bold; border-left: 1px solid #a0a0a0; }
.propgrid thead td, .propgrid thead th { height: 18px; background: #a0a0a0; }
.propgrid thead th { font-size: 12px; font-weight: bold; color: #000080; padding-left: 6px; }
.propgrid .gutter { padding: 0 0 0 5px; background: #a0a0a0; border: 0; }
.gutter svg { display: block; width: 9px; height: 6px; }
.propgrid .current th { background: #a0a0a0; color: #333; }
.hint { height: 59px; margin-top: 3px; padding: 3px 4px; border: 1px solid #a0a0a0; display: flex; flex-direction: column; line-height: 15px; background: #f0f0f0; }
.hint b { font-size: 12px; }

.tabs { display: flex; align-items: flex-end; height: 21px; flex: none; position: relative; overflow: hidden; padding-right: 2px; }
.tab { height: 18px; padding: 0 6px 0 3px; white-space: nowrap; flex: none; border: 1px solid #d9d9d9; border-bottom: 0; border-left: 0; background: #f0f0f0; }
.tab.active { height: 20px; padding: 0 12px 0 2px; background: #fff; }
.tab.cut { border-right: 0; padding-left: 6px; }
.spin { position: absolute; right: 1px; top: 2px; display: flex; }
.spin button { width: 16px; height: 17px; border: 1px solid #adadad; background: #f0f0f0; display: flex; align-items: center; justify-content: center; }
.spin button::before { content: ""; border: 4px solid transparent; }
.spin .prev::before { border-right-color: #000; border-left: 0; }
.spin .next::before { border-left-color: #000; border-right: 0; }
.page { flex: 1; min-height: 0; display: flex; flex-direction: column; padding: 3px 4px 6px 0; margin-right: 2px; background: #fff; border: 1px solid #d9d9d9; border-left: 0; }
.drawbar { height: 24px; background: #f0f0f0; padding-left: 1px; }
.num { width: 40px; height: 20px; margin: 0 1px 0 0; flex: none; border: 1px solid #c6c6c6; background: #f4f4f4; color: #8a8a8a; text-align: center; }
.canvas { flex: 1; min-height: 0; margin-top: 1px; border-right: 5px solid #00bfff; border-bottom: 4px solid #00bfff; overflow: hidden; }
.drawing { display: block; margin-left: 1px; }
.title { font-size: 16px; }
.dims path { stroke: #00f; fill: none; }
.dims text { fill: #00f; font-size: 8px; text-anchor: middle; }

.status { position: relative; overflow: hidden; display: flex; align-items: center; padding: 0 4px 0 2px; margin-top: 1px; background: linear-gradient(90deg, #8fb1e1 0, #a5c0e8 22%, #d5e1f3 50%, #f4f7fc 70%, #fff 85%); font-family: "Open Sans", sans-serif; }
.progress { position: relative; width: 220px; height: 16px; background: #e6e6e6; border: 1px solid #bcbcbc; }
.resize { width: 12px; height: 12px; margin-left: auto; align-self: flex-end; }
.word { position: absolute; white-space: nowrap; color: #c5d8f0; line-height: 20px; }
.w1 { left: 13px; top: 13px; font-size: 18px; }
.w2 { left: 236px; top: 4px; font-size: 14px; color: #7fa6de; }
.w3 { left: 467px; top: -2px; font-size: 18px; color: #fff; }
.w4 { left: 598px; top: -9px; font-size: 27px; }
.w5 { left: 757px; top: 13px; font-size: 17px; }
.block { position: absolute; left: 685px; top: 17px; width: 21px; height: 10px; border: 3px solid #d5d5d5; }
```
